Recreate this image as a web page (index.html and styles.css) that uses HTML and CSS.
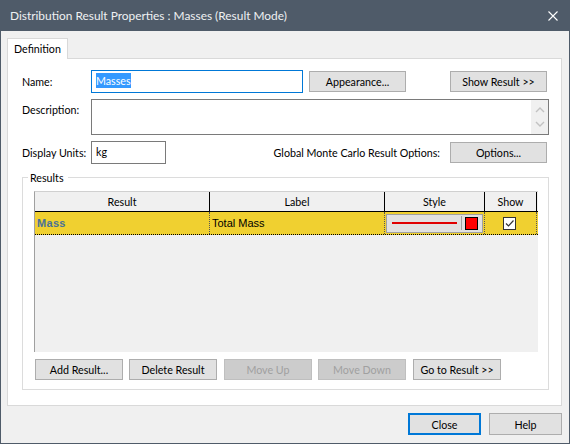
FILE: index.html
```html
<!DOCTYPE html>
<html lang="en">
<head>
  <meta charset="UTF-8">
  <title>Distribution Result Properties</title>
  <link rel="stylesheet" href="styles.css">
</head>
<body>
  <div class="window">
    <div class="titlebar">
      <span class="title">Distribution Result Properties : Masses (Result Mode)</span>
      <svg class="close-x" width="10" height="10" viewBox="0 0 10 10">
        <path d="M0.5 0.5 L9.5 9.5 M9.5 0.5 L0.5 9.5" stroke="#fff" stroke-width="1.1" fill="none"/>
      </svg>
    </div>

    <div class="client">
      <div class="tabs">
        <div class="tab">Definition</div>
      </div>

      <div class="panel">
        <div class="row row-name">
          <label class="lbl">Name:</label>
          <div class="field name-field"><span class="sel">Masses</span></div>
          <button class="btn appearance">Appearance...</button>
          <button class="btn push-right">Show Result &gt;&gt;</button>
        </div>

        <div class="row row-desc">
          <label class="lbl">Description:</label>
          <div class="field desc-field">
            <div class="vscroll">
              <svg width="10" height="6" viewBox="0 0 10 6"><path d="M1 5 L5 1 L9 5" stroke="#c2c2c2" stroke-width="1.4" fill="none"/></svg>
              <svg width="10" height="6" viewBox="0 0 10 6"><path d="M1 1 L5 5 L9 1" stroke="#c2c2c2" stroke-width="1.4" fill="none"/></svg>
            </div>
          </div>
        </div>

        <div class="row row-units">
          <label class="lbl">Display Units:</label>
          <div class="field units-field">kg</div>
          <span class="mc-label">Global Monte Carlo Result Options:</span>
          <button class="btn">Options...</button>
        </div>

        <fieldset class="results">
          <legend>Results</legend>
          <div class="grid">
            <div class="grid-head">
              <div class="col c-result">Result</div>
              <div class="col c-label">Label</div>
              <div class="col c-style">Style</div>
              <div class="col c-show">Show</div>
            </div>
            <div class="grid-row">
              <div class="cell c-result mass">Mass</div>
              <div class="cell c-label">Total Mass</div>
              <div class="cell c-style">
                <div class="style-box">
                  <span class="style-line"></span>
                  <span class="style-sep"></span>
                  <span class="style-swatch"></span>
                </div>
              </div>
              <div class="cell c-show">
                <span class="check">
                  <svg width="11" height="11" viewBox="0 0 11 11"><path d="M2 5.5 L4.5 8 L9.5 2.5" stroke="#333" stroke-width="1.2" fill="none"/></svg>
                </span>
              </div>
            </div>
          </div>

          <div class="grid-buttons">
            <button class="btn">Add Result...</button>
            <button class="btn">Delete Result</button>
            <button class="btn gap1" disabled>Move Up</button>
            <button class="btn" disabled>Move Down</button>
            <button class="btn gap1">Go to Result &gt;&gt;</button>
          </div>
        </fieldset>
      </div>

      <div class="footer">
        <button class="btn wide default">Close</button>
        <button class="btn wide">Help</button>
      </div>
    </div>
  </div>
</body>
</html>
```

FILE: styles.css
```css
* {
  box-sizing: border-box;
}
body {
  margin: 0;
  font-family: Lato, "Noto Sans", Arial, sans-serif;
  font-size: 10.7px;
  color: #000;
}
.window {
  width: 570px;
  height: 444px;
  background-color: #f0f0f0;
  border: 1px solid #4f5b69;
  border-top: 0;
  display: flex;
  flex-direction: column;
}
.titlebar {
  height: 31px;
  margin: 0 -1px;
  background-color: #4f5b69;
  color: #eef0f2;
  display: flex;
  align-items: center;
  justify-content: space-between;
  padding: 0 12px 0 10px;
  font-size: 11.9px;
}
.client {
  flex: 1;
  padding: 7px 7px 0 6px;
}
.tabs {
  display: flex;
}
.tab {
  width: 61px;
  height: 21px;
  margin-bottom: -1px;
  background-color: #fff;
  border: 1px solid #d9d9d9;
  border-bottom: 0;
  padding: 3px 0 0 6px;
  position: relative;
  z-index: 1;
}
.panel {
  height: 348px;
  background-color: #fff;
  border: 1px solid #d9d9d9;
  padding: 11px 14px 0 14px;
}
.row {
  display: flex;
  align-items: center;
}
.lbl {
  width: 69px;
  flex-shrink: 0;
  white-space: nowrap;
}
.field {
  height: 23px;
  border: 1px solid #7a7a7a;
  background-color: #fff;
  padding: 3px 4px;
}
.name-field {
  width: 212px;
  border-color: #0078d7;
}
.sel {
  background-color: #3399ff;
  color: #fff;
  padding: 1px 0;
}
.appearance {
  margin-left: 6px;
}
.push-right {
  margin-left: auto;
}
.btn {
  width: 97px;
  height: 21px;
  padding: 0;
  font-family: inherit;
  font-size: inherit;
  color: #000;
  background-color: #e1e1e1;
  border: 1px solid #adadad;
  border-radius: 0;
  white-space: nowrap;
}
.btn:disabled {
  background-color: #cccccc;
  border-color: #bfbfbf;
  color: #a0a0a0;
}
.row-desc {
  margin-top: 6px;
  align-items: flex-start;
}
.row-desc .lbl {
  padding-top: 4px;
}
.desc-field {
  width: 458px;
  height: 36px;
  margin-right: -2px;
  padding: 0;
  display: flex;
  justify-content: flex-end;
}
.vscroll {
  width: 17px;
  background-color: #f0f0f0;
  display: flex;
  flex-direction: column;
  justify-content: space-around;
  align-items: center;
  padding: 3px 0;
}
.row-units {
  margin-top: 6px;
}
.units-field {
  width: 75px;
}
.mc-label {
  margin-left: auto;
  margin-right: 10px;
}
.results {
  margin: 7px 0 0 0;
  width: 527px;
  border: 1px solid #dcdcdc;
  padding: 7px 10px 9px 11px;
}
.results legend {
  margin-left: -6px;
  padding: 0 4px 0 2px;
}
.grid {
  width: 504px;
  height: 161px;
  background-color: #f0f0f0;
  border-left: 1px solid #a0a0a0;
  border-top: 1px solid #d0d0d0;
}
.grid-head {
  display: flex;
  height: 20px;
  border-bottom: 1px solid #000;
}
.grid-head .col {
  border-right: 1px solid #000;
  text-align: center;
  line-height: 19px;
}
.c-result { width: 175px; }
.c-label { width: 175px; }
.c-style { width: 100px; }
.c-show { width: 52px; }
.grid-row {
  display: flex;
  height: 23px;
  width: 503px;
  background-color: #f0d030;
  border-bottom: 1px dotted #000;
  font-family: "Liberation Sans", Arial, sans-serif;
  font-size: 11px;
}
.grid-row .cell {
  border-right: 1px dotted #555;
  display: flex;
  align-items: center;
  padding-left: 2px;
}
.mass {
  font-weight: bold;
  color: #4a7198;
  letter-spacing: 0.3px;
}
.grid-row .c-style {
  padding-left: 1px;
}
.style-box {
  width: 97px;
  height: 19px;
  background-color: #e1e1e1;
  border: 1px solid #a0a0a0;
  display: flex;
  align-items: center;
  padding: 0 4px 0 5px;
}
.style-line {
  width: 66px;
  height: 2px;
  background-color: #e00000;
}
.style-sep {
  width: 1px;
  height: 14px;
  margin: 0 3px 0 4px;
  background-color: #a0a0a0;
}
.style-swatch {
  width: 13px;
  height: 13px;
  background-color: #ff0000;
  border: 1px solid #000;
}
.grid-row .c-show {
  justify-content: center;
  padding-left: 0;
}
.check {
  width: 13px;
  height: 13px;
  margin-right: 2px;
  background-color: #fff;
  border: 1px solid #333;
  display: flex;
  align-items: center;
  justify-content: center;
}
.grid-buttons {
  display: flex;
  gap: 6px;
  margin-top: 7px;
  padding-left: 1px;
}
.grid-buttons .btn {
  width: 88px;
}
.grid-buttons .gap1 {
  margin-left: 1px;
}
.footer {
  display: flex;
  justify-content: flex-end;
  gap: 8px;
  margin-top: 7px;
}
.btn.wide {
  width: 73px;
  height: 22px;
}
.btn.default {
  border: 2px solid #0078d7;
}
```
